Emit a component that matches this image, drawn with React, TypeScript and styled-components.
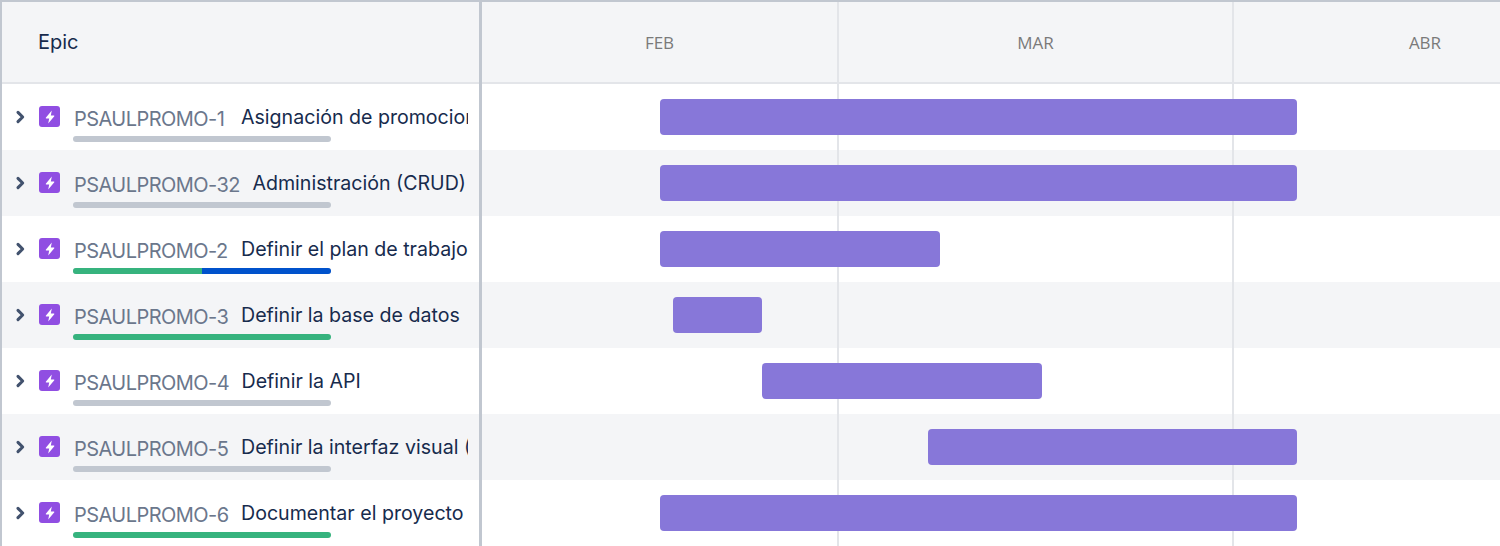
import styled, { createGlobalStyle } from "styled-components";

const GlobalStyle = createGlobalStyle`
  html, body {
    margin: 0;
    padding: 0;
    background: #fff;
    overflow: hidden;
  }
`;

type Epic = {
  id: string;
  title: string;
  start: number;
  width: number;
  done: number;
  doing: number;
};

const EPICS: Epic[] = [
  { id: "PSAULPROMO-1", title: "Asignación de promociones", start: 178, width: 637, done: 0, doing: 0 },
  { id: "PSAULPROMO-32", title: "Administración (CRUD) de promociones", start: 178, width: 637, done: 0, doing: 0 },
  { id: "PSAULPROMO-2", title: "Definir el plan de trabajo", start: 178, width: 280, done: 50, doing: 50 },
  { id: "PSAULPROMO-3", title: "Definir la base de datos", start: 191, width: 89, done: 100, doing: 0 },
  { id: "PSAULPROMO-4", title: "Definir la API", start: 280, width: 280, done: 0, doing: 0 },
  { id: "PSAULPROMO-5", title: "Definir la interfaz visual (UI)", start: 446, width: 369, done: 0, doing: 0 },
  { id: "PSAULPROMO-6", title: "Documentar el proyecto", start: 178, width: 637, done: 100, doing: 0 },
];

const MONTHS = [
  { label: "FEB", width: 357 },
  { label: "MAR", width: 395 },
  { label: "ABR", width: 382 },
];

const Chevron = () => (
  <ChevronBox viewBox="0 0 24 24" fill="none">
    <path d="M9 5 16 12l-7 7" stroke="#42526e" strokeWidth="4.6" strokeLinecap="round" strokeLinejoin="round" />
  </ChevronBox>
);

const EpicIcon = () => (
  <IconBox>
    <svg width="14" height="16" viewBox="0 0 14 16">
      <path d="M8.8 1.5 2.8 8.8c-.2.3 0 .7.4.7h3L5.2 14.5 11.3 7.2c.2-.3 0-.7-.4-.7H7.8l1-5Z" fill="#fff" />
    </svg>
  </IconBox>
);

export default function App() {
  return (
    <>
      <GlobalStyle />
      <Frame>
        <Sidebar>
          <SideHeader>Epic</SideHeader>
          {EPICS.map((epic, i) => (
            <SideRow key={epic.id} $striped={i % 2 === 1}>
              <Chevron />
              <EpicIcon />
              <KeyColumn>
                <KeyRow>
                  <Key>{epic.id}</Key>
                  <Title>{epic.title}</Title>
                </KeyRow>
                <Progress>
                  <ProgressPart $color="#36b37e" style={{ width: `${epic.done}%` }} />
                  <ProgressPart $color="#0052cc" style={{ width: `${epic.doing}%` }} />
                </Progress>
              </KeyColumn>
            </SideRow>
          ))}
        </Sidebar>
        <Timeline>
          <MonthHeader>
            {MONTHS.map((m) => (
              <Month key={m.label} style={{ width: m.width }}>
                {m.label}
              </Month>
            ))}
          </MonthHeader>
          <Body>
            <GridLine $left={355} />
            <GridLine $left={750} />
            {EPICS.map((epic, i) => (
              <BarRow key={epic.id} $striped={i % 2 === 1}>
                <Bar style={{ marginLeft: epic.start, width: epic.width }} />
              </BarRow>
            ))}
          </Body>
        </Timeline>
      </Frame>
    </>
  );
}

const Frame = styled.div`
  display: flex;
  width: 1500px;
  height: 546px;
  overflow: hidden;
  box-sizing: border-box;
  border-top: 2px solid #c1c7d0;
  border-left: 2px solid #c1c7d0;
`;

const Sidebar = styled.div`
  width: 477px;
  flex-shrink: 0;
  box-sizing: content-box;
  border-right: 3px solid #c1c7d0;
`;

const SideHeader = styled.div`
  height: 82px;
  box-sizing: border-box;
  padding: 28px 0 0 36px;
  background: #f4f5f7;
  border-bottom: 2px solid #e3e5e9;
  font-family: "Inter", "Liberation Sans", sans-serif;
  font-size: 20px;
  line-height: 24px;
  color: #172b4d;
`;

const SideRow = styled.div<{ $striped: boolean }>`
  display: flex;
  align-items: flex-start;
  height: 66px;
  padding-right: 11px;
  box-sizing: border-box;
  overflow: hidden;
  background: ${({ $striped }) => ($striped ? "#f4f5f7" : "#fff")};
`;

const ChevronBox = styled.svg`
  width: 16px;
  height: 16px;
  margin: 25px 0 0 10px;
  flex-shrink: 0;
`;

const IconBox = styled.div`
  display: flex;
  align-items: center;
  justify-content: center;
  width: 21px;
  height: 21px;
  margin: 22px 0 0 11px;
  flex-shrink: 0;
  border-radius: 3px;
  background: #904ee2;
`;

const KeyColumn = styled.div`
  flex: 1;
  min-width: 0;
  margin: 19px 0 0 14px;
`;

const KeyRow = styled.div`
  display: flex;
  align-items: baseline;
  gap: 12.5px;
  height: 28px;
  white-space: nowrap;
  overflow: hidden;
`;

const Key = styled.span`
  font-family: "Inter", "Liberation Sans", sans-serif;
  font-size: 20px;
  letter-spacing: -0.55px;
  line-height: 28px;
  color: #6b778c;
  position: relative;
  top: 2px;
  flex-shrink: 0;
  min-width: 154.5px;
`;

const Title = styled.span`
  font-family: "Inter", "Liberation Sans", sans-serif;
  font-size: 19.6px;
  line-height: 26px;
  color: #172b4d;
  overflow: hidden;
`;

const Progress = styled.div`
  display: flex;
  width: 258px;
  height: 6px;
  margin: 5px 0 0 -1px;
  border-radius: 3px;
  overflow: hidden;
  background: #c1c7d0;
`;

const ProgressPart = styled.div<{ $color: string }>`
  height: 100%;
  background: ${({ $color }) => $color};
`;

const Timeline = styled.div`
  flex: 1;
  min-width: 0;
`;

const MonthHeader = styled.div`
  display: flex;
  height: 82px;
  box-sizing: border-box;
  background: #f4f5f7;
  border-bottom: 2px solid #e3e5e9;
`;

const Month = styled.div`
  flex-shrink: 0;
  box-sizing: border-box;
  padding-top: 30px;
  text-align: center;
  font-family: "Open Sans", "Liberation Sans", sans-serif;
  font-size: 17px;
  line-height: 22px;
  color: #7a7a7a;
  border-right: 2px solid #e3e5e9;

  &:last-child {
    border-right: none;
  }
`;

const Body = styled.div`
  position: relative;
`;

const GridLine = styled.div<{ $left: number }>`
  position: absolute;
  top: 0;
  bottom: 0;
  left: ${({ $left }) => $left}px;
  width: 2px;
  background: #e3e5e9;
`;

const BarRow = styled.div<{ $striped: boolean }>`
  height: 66px;
  padding-top: 15px;
  box-sizing: border-box;
  background: ${({ $striped }) => ($striped ? "#f4f5f7" : "transparent")};
`;

const Bar = styled.div`
  position: relative;
  height: 36px;
  border-radius: 4px;
  background: #8777d9;
`;
